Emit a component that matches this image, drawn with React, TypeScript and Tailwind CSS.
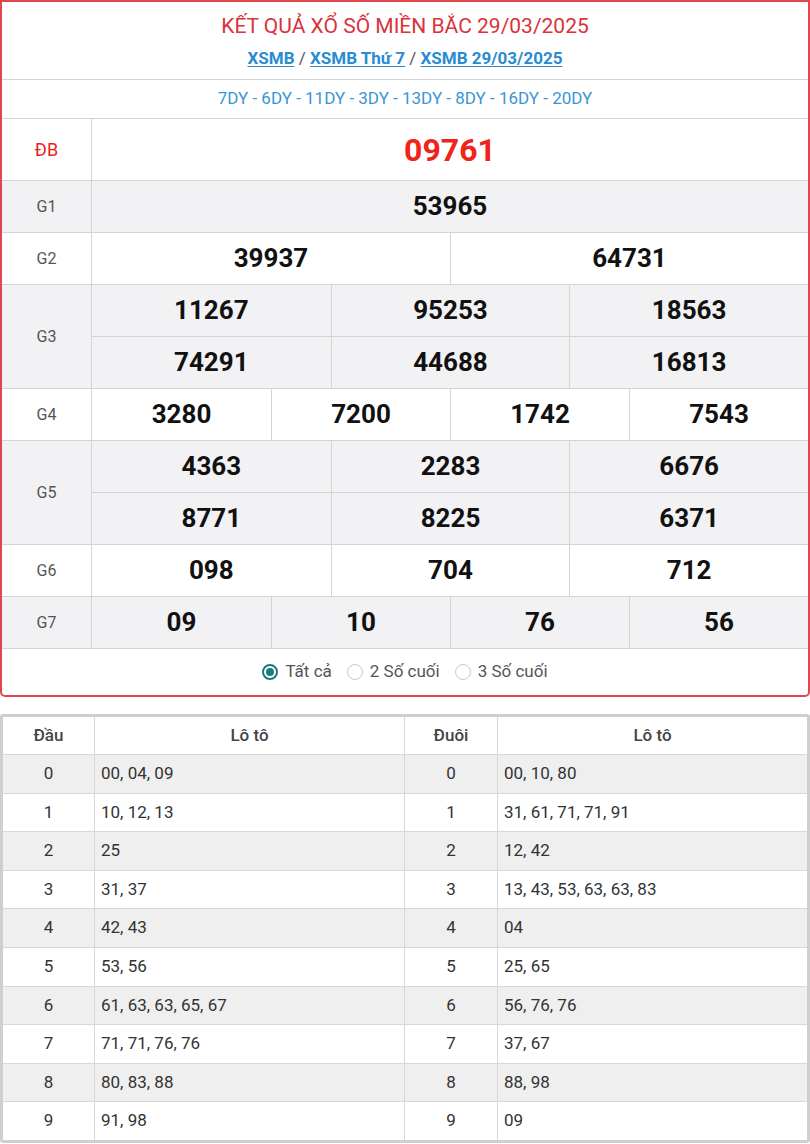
import React from "react";

const font = { fontFamily: "Roboto, 'Noto Sans', sans-serif" };

function Num({ v, className = "" }: { v: string; className?: string }) {
  return (
    <div className={`flex items-center justify-center text-[26px] font-bold text-[#111] ${className}`}>{v}</div>
  );
}

function PrizeRow({
  label,
  rows,
  cols,
  gray,
}: {
  label: string;
  rows: string[][];
  cols: number;
  gray: boolean;
}) {
  const gridCols = cols === 1 ? "grid-cols-1" : cols === 2 ? "grid-cols-2" : cols === 3 ? "grid-cols-3" : "grid-cols-4";
  return (
    <div className={`flex border-t border-[#d4d4d4] ${gray ? "bg-[#f2f1f3]" : "bg-white"}`}>
      <div className="w-[90px] shrink-0 flex items-center justify-center text-[16px] text-[#555] border-r border-[#d4d4d4]">
        {label}
      </div>
      <div className="flex-1 flex flex-col">
        {rows.map((r, i) => (
          <div key={i} className={`grid ${gridCols} h-[51px] ${i > 0 ? "border-t border-[#d4d4d4] h-[52px]" : ""}`}>
            {r.map((v, j) => (
              <Num key={j} v={v} className={j > 0 ? "border-l border-[#d4d4d4]" : ""} />
            ))}
          </div>
        ))}
      </div>
    </div>
  );
}

const loto: [string, string, string, string][] = [
  ["0", "00, 04, 09", "0", "00, 10, 80"],
  ["1", "10, 12, 13", "1", "31, 61, 71, 71, 91"],
  ["2", "25", "2", "12, 42"],
  ["3", "31, 37", "3", "13, 43, 53, 63, 63, 83"],
  ["4", "42, 43", "4", "04"],
  ["5", "53, 56", "5", "25, 65"],
  ["6", "61, 63, 63, 65, 67", "6", "56, 76, 76"],
  ["7", "71, 71, 76, 76", "7", "37, 67"],
  ["8", "80, 83, 88", "8", "88, 98"],
  ["9", "91, 98", "9", "09"],
];

export default function App() {
  return (
    <div className="w-[810px] bg-white" style={font}>
      <div className="border-2 border-[#e0474c] rounded-b-[5px] overflow-hidden">
        <div className="h-[77px] flex flex-col items-center">
          <div className="mt-[10px] text-[21px] text-[#d7343c] leading-[28px]">KẾT QUẢ XỔ SỐ MIỀN BẮC 29/03/2025</div>
          <div className="mt-[6px] text-[17px] font-bold leading-[24px] text-[#555]">
            <span className="text-[#2a8bd0] underline underline-offset-2">XSMB</span>
            <span className="font-normal"> / </span>
            <span className="text-[#2a8bd0] underline underline-offset-2">XSMB Thứ 7</span>
            <span className="font-normal"> / </span>
            <span className="text-[#2a8bd0] underline underline-offset-2">XSMB 29/03/2025</span>
          </div>
        </div>
        <div className="h-[39px] border-t border-[#d4d4d4] flex items-center justify-center text-[17px] text-[#3a95d6]">
          7DY - 6DY - 11DY - 3DY - 13DY - 8DY - 16DY - 20DY
        </div>
        <div className="flex border-t border-[#d4d4d4] h-[62px]">
          <div className="w-[90px] shrink-0 flex items-center justify-center text-[18px] text-[#e8251c] border-r border-[#d4d4d4]">
            ĐB
          </div>
          <div className="flex-1 flex items-center justify-center text-[32px] font-bold text-[#f0241b]">09761</div>
        </div>
        <PrizeRow label="G1" rows={[["53965"]]} cols={1} gray />
        <PrizeRow label="G2" rows={[["39937", "64731"]]} cols={2} gray={false} />
        <PrizeRow label="G3" rows={[["11267", "95253", "18563"], ["74291", "44688", "16813"]]} cols={3} gray />
        <PrizeRow label="G4" rows={[["3280", "7200", "1742", "7543"]]} cols={4} gray={false} />
        <PrizeRow label="G5" rows={[["4363", "2283", "6676"], ["8771", "8225", "6371"]]} cols={3} gray />
        <PrizeRow label="G6" rows={[["098", "704", "712"]]} cols={3} gray={false} />
        <PrizeRow label="G7" rows={[["09", "10", "76", "56"]]} cols={4} gray />
        <div className="h-[47px] border-t border-[#d4d4d4] flex items-center justify-center gap-[15px] text-[17px] text-[#555]">
          <label className="flex items-center gap-[7px]">
            <span className="w-[16px] h-[16px] rounded-full border-2 border-[#1b7a7e] flex items-center justify-center">
              <span className="w-[8px] h-[8px] rounded-full bg-[#1b7a7e]" />
            </span>
            Tất cả
          </label>
          <label className="flex items-center gap-[7px]">
            <span className="w-[16px] h-[16px] rounded-full border border-[#c8c8c8]" />
            2 Số cuối
          </label>
          <label className="flex items-center gap-[7px]">
            <span className="w-[16px] h-[16px] rounded-full border border-[#c8c8c8]" />
            3 Số cuối
          </label>
        </div>
      </div>

      <div className="mt-[17px] border-[3px] border-[#cfcfcf] rounded-[3px] text-[17px] text-[#333]">
        <div className="grid grid-cols-[92px_310px_93px_1fr] h-[37px] font-medium text-[#444]">
          <div className="flex items-center justify-center border-r border-[#d8d8d8]">Đầu</div>
          <div className="flex items-center justify-center border-r border-[#d8d8d8]">Lô tô</div>
          <div className="flex items-center justify-center border-r border-[#d8d8d8]">Đuôi</div>
          <div className="flex items-center justify-center">Lô tô</div>
        </div>
        {loto.map((r, i) => (
          <div
            key={i}
            className={`grid grid-cols-[92px_310px_93px_1fr] h-[38.6px] border-t border-[#d8d8d8] ${
              i % 2 === 0 ? "bg-[#efefef]" : "bg-white"
            }`}
          >
            <div className="flex items-center justify-center border-r border-[#d8d8d8]">{r[0]}</div>
            <div className="flex items-center pl-[6px] border-r border-[#d8d8d8]">{r[1]}</div>
            <div className="flex items-center justify-center border-r border-[#d8d8d8]">{r[2]}</div>
            <div className="flex items-center pl-[6px]">{r[3]}</div>
          </div>
        ))}
      </div>
    </div>
  );
}
